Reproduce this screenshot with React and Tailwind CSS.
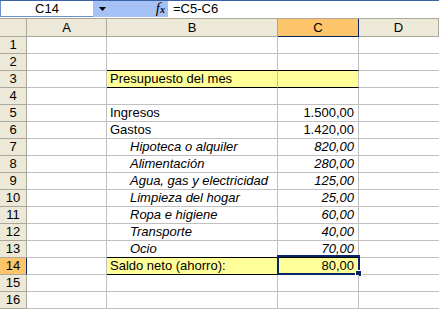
import React from "react";

const cols = ["A", "B", "C", "D"];

const rows = [
  {},
  { edgeB: true },
  { b: "Presupuesto del mes", fill: true, edgeB: true },
  {},
  { b: "Ingresos", c: "1.500,00" },
  { b: "Gastos", c: "1.420,00" },
  { b: "Hipoteca o alquiler", c: "820,00", sub: true },
  { b: "Alimentación", c: "280,00", sub: true },
  { b: "Agua, gas y electricidad", c: "125,00", sub: true },
  { b: "Limpieza del hogar", c: "25,00", sub: true },
  { b: "Ropa e higiene", c: "60,00", sub: true },
  { b: "Transporte", c: "40,00", sub: true },
  { b: "Ocio", c: "70,00", sub: true, edgeB: true },
  { b: "Saldo neto (ahorro):", c: "80,00", fill: true, edgeB: true, active: true },
  {},
  {},
];

function HeaderRow() {
  return (
    <div className="grid grid-cols-[27px_80px_171px_81px_80px] h-[19px] border-t border-[#aca899] bg-[#ece9d8]">
      <div className="border-r border-b border-[#aca899]" />
      {cols.map((c) =>
        c === "C" ? (
          <div
            key={c}
            className="bg-[#fcc56b] border-r border-r-[#0a246a] border-b border-b-[#0a246a] text-center leading-[17px]"
          >
            {c}
          </div>
        ) : (
          <div key={c} className="border-r border-b border-[#aca899] text-center leading-[17px]">
            {c}
          </div>
        )
      )}
    </div>
  );
}

function Row({ n, row }) {
  const edge = row.edgeB ? "border-b-black" : "border-b-[#c0c0c0]";
  const fill = row.fill ? "bg-[#ffff99]" : "bg-white";
  return (
    <div className="grid grid-cols-[27px_80px_171px_81px_80px] h-[17px]">
      {row.active ? (
        <div className="bg-[#fcc56b] border-r border-r-[#0a246a] border-b border-b-[#aca899] text-center leading-[16px]">
          {n}
        </div>
      ) : (
        <div className="bg-[#ece9d8] border-r border-b border-[#aca899] text-center leading-[16px]">
          {n}
        </div>
      )}
      <div className="border-r border-b border-[#c0c0c0]" />
      <div
        className={`border-r border-r-[#c0c0c0] border-b ${edge} ${fill} leading-[16px] whitespace-nowrap ${
          row.sub ? "pl-[23px] italic" : "pl-[3px]"
        }`}
      >
        {row.b}
      </div>
      <div
        className={`relative border-r border-r-[#c0c0c0] border-b ${edge} ${fill} leading-[16px] text-right pr-[4px] whitespace-nowrap ${
          row.sub ? "italic" : ""
        }`}
      >
        {row.c}
        {row.active && (
          <div className="absolute -top-[3px] -left-px -right-[2px] -bottom-[1px] border-[2px] border-[#0a246a]">
            <div className="absolute -right-[4px] -bottom-[4px] w-[7px] h-[7px] bg-[#0a246a] border border-white" />
          </div>
        )}
      </div>
      <div className="border-b border-[#c0c0c0]" />
    </div>
  );
}

export default function App() {
  return (
    <div className="w-[439px] h-[309px] overflow-hidden bg-white text-black text-[13px] font-['Liberation_Sans',Arial,sans-serif]">
      <div className="h-[18px] border-t border-[#3a62a8]">
        <div className="flex h-[16px]">
          <div className="w-[93px] bg-white border-l border-b border-[#6b8fd6] text-center leading-[15px]">
            C14
          </div>
          <div className="w-[75px] bg-[#a5c1f5] flex items-center justify-between pl-[6px] pr-[3px]">
            <svg width="7" height="4" viewBox="0 0 7 4">
              <polygon points="0,0 7,0 3.5,4" fill="#000" />
            </svg>
            <span className="font-['Liberation_Serif',serif] italic text-[15px] leading-[15px]">
              f<span className="text-[10px] font-bold">x</span>
            </span>
          </div>
          <div className="flex-1 bg-white pl-[5px] leading-[15px]">=C5-C6</div>
        </div>
      </div>
      <HeaderRow />
      {rows.map((r, i) => (
        <Row key={i} n={i + 1} row={r} />
      ))}
    </div>
  );
}
